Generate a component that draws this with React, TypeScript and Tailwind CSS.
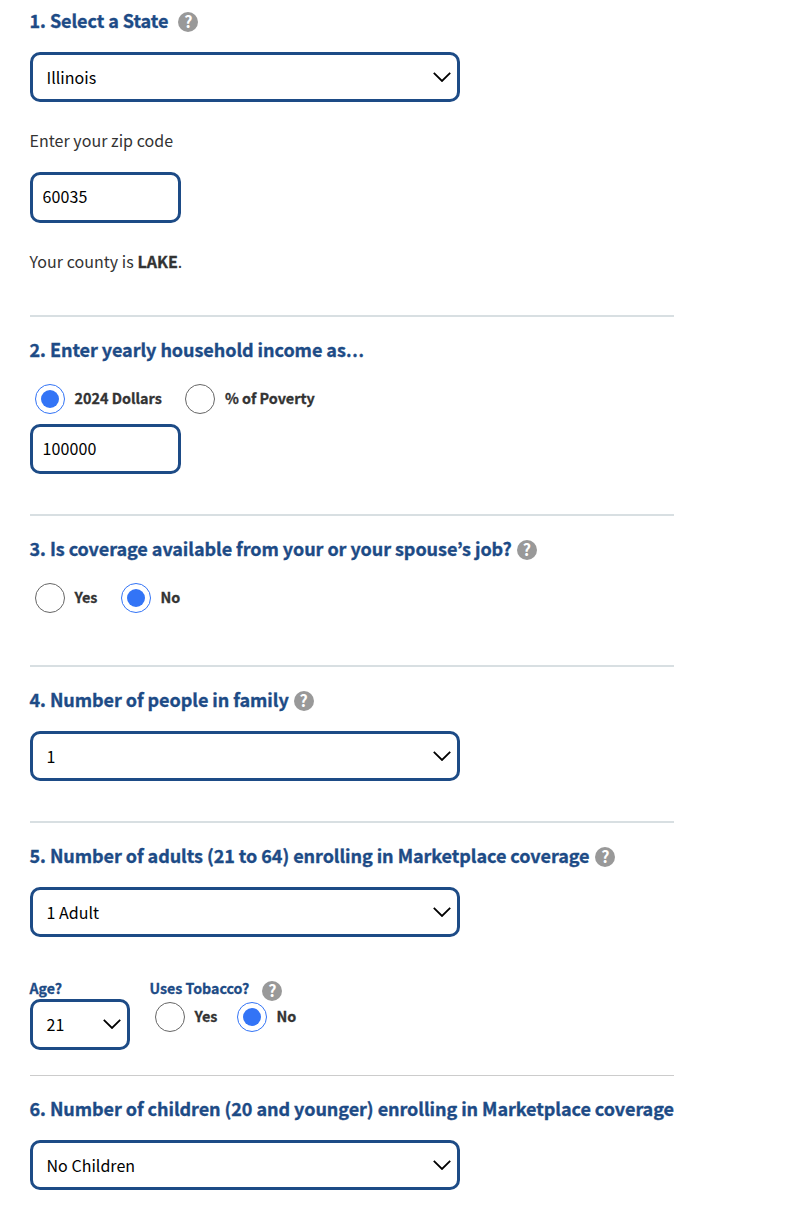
import React from "react";

function Help({ className = "" }: { className?: string }) {
  return (
    <span
      className={`flex h-5 w-5 shrink-0 items-center justify-center rounded-full bg-[#999999] pb-[2px] text-[16px] leading-[18px] font-bold tracking-normal text-white [-webkit-text-stroke:0px] ${className}`}
    >
      ?
    </span>
  );
}

function Heading({ children }: { children: React.ReactNode }) {
  return (
    <h2 className="-ml-[0.5px] flex h-[30px] items-center pb-px text-[18px] leading-[29px] font-bold tracking-[-0.055px] whitespace-nowrap text-[#1d4b86] [-webkit-text-stroke:0.35px_#1d4b86]">
      {children}
    </h2>
  );
}

function Select({ value, className }: { value: string; className: string }) {
  return (
    <button
      type="button"
      className={`flex items-center justify-between rounded-[10px] border-3 border-[#1d4b86] bg-white pr-[6.5px] pl-[13.5px] text-[16px] leading-6 tracking-[0.03px] text-black ${className}`}
    >
      <span>{value}</span>
      <svg className="h-[10px] w-[18px] shrink-0" viewBox="0 0 18 10" fill="none" stroke="#000" strokeWidth="1.8">
        <path d="M.8.9 9 9 17.2.9" />
      </svg>
    </button>
  );
}

function Radio({ label, checked = false, gap = "" }: { label: string; checked?: boolean; gap?: string }) {
  return (
    <label className={`flex items-center ${gap}`}>
      <span
        className={`flex h-[30px] w-[30px] items-center justify-center rounded-full border ${checked ? "border-[#3374f6]" : "border-[#666666]"}`}
      >
        {checked && <span className="h-[18px] w-[18px] rounded-full bg-[#3374f6]" />}
      </span>
      <span className="ml-[9.5px] pb-[2px] text-[14.4px] leading-5 font-bold whitespace-nowrap text-[#333333] [-webkit-text-stroke:0.3px_#333333]">
        {label}
      </span>
    </label>
  );
}

export default function App() {
  return (
    <main className="h-[1210px] w-[794px] overflow-hidden bg-white pl-[30px] font-['Noto_Sans_CJK_KR',sans-serif] text-[#333333]">
      <div className="w-[644px]">
        <section className="h-[317px] border-b-2 border-[#d8dfe2] pt-[6px]">
          <Heading>
            1. Select a State
            <Help className="mt-[2px] ml-[10px]" />
          </Heading>
          <Select value="Illinois" className="mt-4 h-[50px] w-[430px]" />
          <p className="mt-[23px] -ml-[0.5px] text-[16px] leading-[30px] tracking-[0.04px]">Enter your zip code</p>
          <input
            defaultValue="60035"
            className="mt-[17px] block h-[51px] w-[151px] rounded-[10px] border-3 border-[#1d4b86] pr-[9px] pb-[3px] pl-[9.5px] text-[16px] tracking-[0.1px] text-black outline-none"
          />
          <p className="mt-[23px] -ml-[0.5px] text-[16px] leading-[30px] tracking-[0.04px]">
            Your county is <b className="[-webkit-text-stroke:0.3px_#333333]">LAKE</b>.
          </p>
        </section>

        <section className="h-[199px] border-b-2 border-[#d8dfe2] pt-[18px]">
          <Heading>
            <span>
              2. Enter yearly household income as<span className="text-[16.5px]">…</span>
            </span>
          </Heading>
          <div className="mt-[19px] flex pl-[5px]">
            <Radio label="2024 Dollars" checked />
            <Radio label="% of Poverty" gap="ml-[23.5px]" />
          </div>
          <input
            defaultValue="100000"
            className="mt-[10px] block h-[50px] w-[151px] rounded-[10px] border-3 border-[#1d4b86] pr-[9px] pb-[2px] pl-[9.5px] text-[16px] tracking-[0.1px] text-black outline-none"
          />
        </section>

        <section className="h-[151px] border-b-2 border-[#d8dfe2] pt-[18px]">
          <Heading>
            3. Is coverage available from your or your spouse’s job?
            <Help className="mt-[2px] ml-[5px]" />
          </Heading>
          <div className="mt-[19px] flex pl-[5px]">
            <Radio label="Yes" />
            <Radio label="No" checked gap="ml-[23.5px]" />
          </div>
        </section>

        <section className="h-[156px] border-b-2 border-[#d8dfe2] pt-[18px]">
          <Heading>
            4. Number of people in family
            <Help className="mt-[2px] ml-[5px]" />
          </Heading>
          <Select value="1" className="mt-4 h-[50px] w-[430px]" />
        </section>

        <section className="h-[253px] border-b border-[#cccccc] pt-[18px]">
          <Heading>
            5. Number of adults (21 to 64) enrolling in Marketplace coverage
            <Help className="mt-[2px] ml-[6px]" />
          </Heading>
          <Select value="1 Adult" className="mt-4 h-[50px] w-[430px]" />
          <div className="mt-[41px] flex">
            <div className="w-[120px]">
              <div className="-ml-[0.5px] h-[21px] text-[14.2px] leading-5 font-bold text-[#1d4b86] [-webkit-text-stroke:0.3px_#1d4b86]">
                Age?
              </div>
              <Select value="21" className="h-[51px] w-[100px] pb-px" />
            </div>
            <div>
              <div className="-ml-[0.5px] flex h-[24px] text-[14.2px] leading-5 font-bold text-[#1d4b86] [-webkit-text-stroke:0.3px_#1d4b86]">
                Uses Tobacco?
                <Help className="mt-[3px] ml-[13px]" />
              </div>
              <div className="flex pl-[5px]">
                <Radio label="Yes" />
                <Radio label="No" checked gap="ml-[19.5px]" />
              </div>
            </div>
          </div>
        </section>

        <section className="pt-[18px]">
          <Heading>6. Number of children (20 and younger) enrolling in Marketplace coverage</Heading>
          <Select value="No Children" className="mt-4 h-[50px] w-[430px]" />
        </section>
      </div>
    </main>
  );
}
